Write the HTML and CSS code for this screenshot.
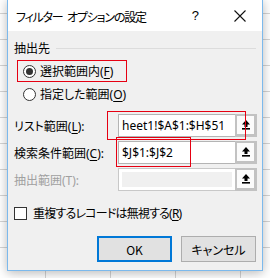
FILE: index.html
```html
<!DOCTYPE html>
<html lang="ja">
<head>
<meta charset="UTF-8">
<title>フィルター オプションの設定</title>
<link rel="stylesheet" href="styles.css">
</head>
<body>
<div class="dialog">
  <div class="titlebar">
    <span class="title">フィルター オプションの設定</span>
    <span class="help">?</span>
    <svg class="close" width="12" height="12" viewBox="0 0 12 12"><path d="M0.5 0.5 L11.5 11.5 M11.5 0.5 L0.5 11.5" stroke="#111" stroke-width="1.1" fill="none"/></svg>
  </div>
  <div class="content">
    <div class="group-head"><span>抽出先</span><i></i></div>
    <label class="radio marked"><span class="dot on"></span><span>選択範囲内(<u>F</u>)</span></label>
    <label class="radio"><span class="dot"></span><span>指定した範囲(<u>O</u>)</span></label>

    <div class="fields">
      <div class="field-row">
        <span class="label">リスト範囲(<u>L</u>):</span>
        <div class="field marked-list">
          <div class="input">heet1!$A$1:$H$51</div>
          <div class="pick"><span><svg width="8" height="10" viewBox="0 0 8 10"><path d="M4 0 L8 4.5 L5.5 4.5 L5.5 7 L2.5 7 L2.5 4.5 L0 4.5 Z" fill="#000"/><rect x="0" y="8" width="8" height="1.6" fill="#000"/></svg></span></div>
        </div>
      </div>
      <div class="field-row">
        <span class="label">検索条件範囲(<u>C</u>):</span>
        <div class="field marked-criteria">
          <div class="input">$J$1:$J$2</div>
          <div class="pick"><span><svg width="8" height="10" viewBox="0 0 8 10"><path d="M4 0 L8 4.5 L5.5 4.5 L5.5 7 L2.5 7 L2.5 4.5 L0 4.5 Z" fill="#000"/><rect x="0" y="8" width="8" height="1.6" fill="#000"/></svg></span></div>
        </div>
      </div>
      <div class="field-row disabled">
        <span class="label">抽出範囲(T):</span>
        <div class="field">
          <div class="input"></div>
          <div class="pick"><span><svg width="8" height="10" viewBox="0 0 8 10"><path d="M4 0 L8 4.5 L5.5 4.5 L5.5 7 L2.5 7 L2.5 4.5 L0 4.5 Z" fill="#000"/><rect x="0" y="8" width="8" height="1.6" fill="#000"/></svg></span></div>
        </div>
      </div>
    </div>

    <label class="check"><span class="box"></span><span class="check-text">重複するレコードは無視する(<u>R</u>)</span></label>

    <div class="actions">
      <button class="btn btn-default">OK</button>
      <button class="btn">キャンセル</button>
    </div>
  </div>
</div>
</body>
</html>
```

FILE: styles.css
```css
* { box-sizing: border-box; margin: 0; padding: 0; }
body {
  width: 270px;
  height: 278px;
  overflow: hidden;
  font-family: "Noto Sans", "Noto Sans CJK JP", sans-serif;
  font-size: 12px;
  font-feature-settings: "palt";
  color: #000;
  background-color: #fff;
  background-image:
    repeating-linear-gradient(to bottom, transparent 0 25px, #d4d4d4 25px 26px),
    repeating-linear-gradient(to right, transparent 0 64px, #d4d4d4 64px 65px);
  background-position: 0 -12px, -19px 0;
}
.dialog {
  width: 256px;
  height: 272px;
  margin: -1px 0 0 7px;
  border: 1px solid #7cb9ec;
  background: #f0f0f0;
  box-shadow: 0 2px 10px rgba(0, 0, 0, 0.28);
  display: flex;
  flex-direction: column;
}
.titlebar {
  height: 31px;
  background: #fff;
  display: flex;
  align-items: center;
  padding: 0 16px 0 8px;
}
.title {
  flex: 1;
  font-family: "Noto Sans CJK JP", sans-serif;
  letter-spacing: -1.2px;
  word-spacing: 3px;
  padding-top: 1px;
}
.help {
  font-family: "Liberation Sans", sans-serif;
  font-size: 13px;
  margin-right: 35px;
}
.close { margin-top: 1px; }

.content {
  flex: 1;
  padding: 9px 5px 8px 6px;
  display: flex;
  flex-direction: column;
}
.group-head {
  display: flex;
  align-items: center;
  height: 16px;
  gap: 6px;
}
.group-head i {
  flex: 1;
  height: 1px;
  background: #dcdcdc;
  margin-right: 1px;
}
.radio {
  display: flex;
  align-items: center;
  gap: 4px;
  height: 22px;
  margin-left: 3px;
  padding-left: 5px;
  border: 1px solid transparent;
}
.radio.marked {
  width: 110px;
  margin-top: 4px;
  border-color: #e60012;
}
.radio + .radio { margin-top: 1px; }
.dot {
  width: 13px;
  height: 13px;
  border: 1px solid #333;
  border-radius: 50%;
  background: #fff;
  display: flex;
  align-items: center;
  justify-content: center;
}
.dot.on::after {
  content: "";
  width: 7px;
  height: 7px;
  border-radius: 50%;
  background: #333;
}

.fields {
  margin-top: 9px;
  display: flex;
  flex-direction: column;
  gap: 4px;
}
.field-row {
  display: flex;
  align-items: center;
  height: 23px;
}
.label { width: 104px; }
.disabled .label { color: #a0a0a0; }
.field {
  position: relative;
  flex: 1;
  display: flex;
  height: 23px;
}
.marked-list::after,
.marked-criteria::after {
  content: "";
  position: absolute;
  z-index: 1;
  border: 1px solid #e60012;
}
.marked-list::after { left: -11px; top: -3px; width: 137px; height: 27px; }
.marked-criteria::after { left: -2px; top: -4px; width: 73px; height: 28px; }
.input {
  flex: 1;
  border: 1px solid #b4b4b4;
  border-right: none;
  background: #fff;
  padding: 0 3px;
  line-height: 21px;
  white-space: nowrap;
  overflow: hidden;
}
.disabled .input {
  border-color: #c8c8c8;
  background: #f0f0f0;
  box-shadow: inset 0 0 0 3px #fff;
}
.pick {
  width: 22px;
  background: #c2c2c2;
  padding: 2px 3px 3px 2px;
}
.pick span {
  display: flex;
  height: 100%;
  align-items: center;
  justify-content: center;
  background: #fbfbfb;
}

.check {
  display: flex;
  align-items: center;
  gap: 6px;
  height: 16px;
  margin-top: 14px;
}
.box {
  width: 13px;
  height: 13px;
  border: 1px solid #333;
  background: #fff;
}
.check-text { letter-spacing: -0.8px; }

.actions {
  margin-top: auto;
  display: flex;
  justify-content: flex-end;
  gap: 9px;
  padding-right: 1px;
}
.btn {
  width: 75px;
  height: 26px;
  font: inherit;
  font-family: "Noto Sans CJK JP", sans-serif;
  background: #e1e1e1;
  border: 1px solid #adadad;
  color: #000;
}
.btn-default { border: 2px solid #0078d7; }
u { text-decoration-thickness: 1px; text-underline-offset: 2px; }
```
